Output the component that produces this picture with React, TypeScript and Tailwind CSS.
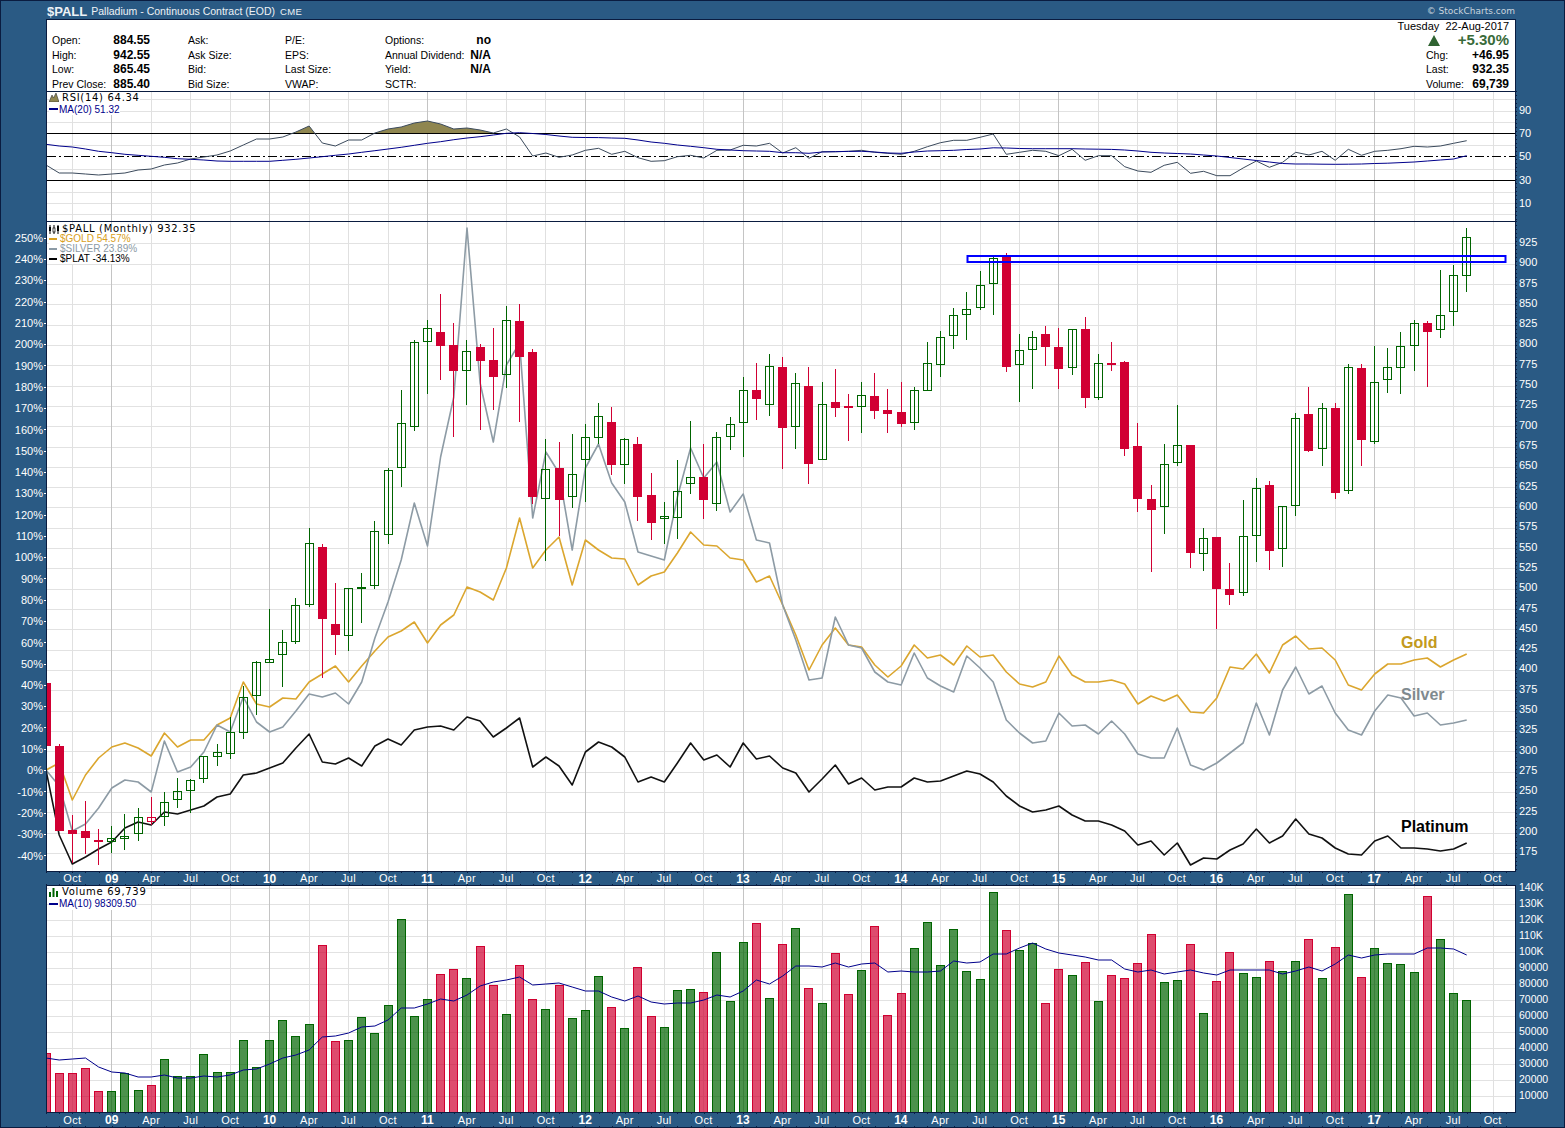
import type { ReactNode } from "react";

// month index 0 = Aug 2008, one candle/bar per month, all y values are px in page space
const stepX = 13.155;
const xAt = (i: number) => 46 + stepX * i;
const pxAt = (i: number) => Math.floor(xAt(i));

type Candle = [number, number, number, number, "g" | "r" | "h"];

// [wick top, wick bottom, body top, body bottom, kind]
const candles: Candle[] = [
  [683, 746, 683, 746, "r"], [744, 831, 746, 831, "r"], [815, 863, 830, 834, "r"], [801, 854, 831, 838, "r"],
  [829, 865, 840, 842, "r"], [826, 853, 838, 842, "g"], [814, 850, 836, 839, "g"], [808, 841, 817, 834, "g"],
  [797, 825, 817, 822, "h"], [792, 826, 802, 817, "g"], [778, 808, 791, 800, "g"], [779, 813, 780, 791, "g"],
  [756, 783, 756, 779, "g"], [744, 766, 752, 757, "g"], [717, 759, 732, 754, "g"], [686, 739, 697, 733, "g"],
  [661, 715, 662, 696, "g"], [609, 663, 659, 663, "g"], [630, 687, 642, 655, "g"], [598, 644, 605, 642, "g"],
  [528, 607, 543, 605, "g"], [544, 678, 547, 619, "r"], [583, 655, 624, 635, "r"], [588, 651, 588, 636, "g"],
  [573, 623, 587, 589, "g"], [521, 589, 531, 586, "g"], [468, 544, 470, 535, "g"], [390, 487, 423, 468, "g"],
  [340, 431, 342, 427, "g"], [320, 394, 328, 342, "g"], [294, 380, 332, 346, "r"], [323, 437, 345, 371, "r"],
  [340, 405, 351, 371, "g"], [344, 430, 347, 361, "r"], [328, 410, 360, 377, "r"], [306, 388, 320, 375, "g"],
  [304, 422, 321, 357, "r"], [349, 504, 352, 497, "r"], [439, 561, 469, 499, "g"], [442, 536, 468, 500, "r"],
  [434, 508, 474, 497, "g"], [424, 502, 437, 460, "g"], [403, 444, 416, 438, "g"], [407, 475, 422, 465, "r"],
  [438, 484, 439, 465, "g"], [437, 521, 444, 497, "r"], [473, 540, 495, 523, "r"], [502, 544, 516, 519, "g"],
  [460, 539, 491, 518, "g"], [421, 494, 477, 484, "g"], [444, 519, 477, 500, "r"], [432, 511, 437, 504, "g"],
  [417, 450, 424, 437, "g"], [377, 457, 390, 423, "g"], [363, 420, 390, 399, "r"], [354, 416, 366, 405, "g"],
  [357, 469, 367, 428, "r"], [373, 449, 383, 427, "g"], [367, 484, 386, 464, "r"], [382, 460, 404, 460, "g"],
  [369, 417, 402, 408, "r"], [394, 441, 406, 408, "r"], [382, 433, 395, 407, "g"], [373, 419, 396, 411, "r"],
  [389, 433, 410, 414, "r"], [382, 427, 412, 424, "r"], [387, 430, 390, 423, "g"], [342, 391, 363, 391, "g"],
  [331, 377, 337, 365, "g"], [308, 349, 315, 336, "g"], [292, 340, 309, 315, "g"], [271, 310, 285, 308, "g"],
  [257, 315, 258, 284, "g"], [253, 372, 256, 367, "r"], [334, 402, 350, 365, "g"], [331, 389, 337, 350, "g"],
  [326, 366, 334, 347, "r"], [328, 389, 347, 369, "r"], [329, 375, 329, 368, "g"], [317, 408, 329, 398, "r"],
  [354, 400, 363, 398, "g"], [342, 371, 363, 365, "r"], [361, 456, 362, 449, "r"], [423, 512, 446, 499, "r"],
  [485, 572, 499, 510, "r"], [444, 534, 464, 507, "g"], [405, 466, 445, 463, "g"], [445, 568, 445, 553, "r"],
  [528, 571, 538, 554, "g"], [537, 629, 537, 589, "r"], [563, 605, 589, 595, "r"], [500, 596, 536, 593, "g"],
  [478, 562, 488, 536, "g"], [481, 570, 485, 551, "r"], [506, 567, 506, 549, "g"], [413, 516, 418, 506, "g"],
  [387, 452, 414, 451, "r"], [403, 466, 408, 449, "g"], [403, 499, 408, 493, "r"], [364, 494, 367, 491, "g"],
  [364, 466, 368, 440, "r"], [346, 444, 382, 442, "g"], [348, 393, 367, 380, "g"], [332, 394, 346, 368, "g"],
  [320, 371, 323, 346, "g"], [321, 387, 323, 332, "r"], [270, 338, 315, 330, "g"], [265, 326, 275, 312, "g"],
  [228, 292, 237, 276, "g"],
];

const gold = [
  770, 763, 800, 775, 758, 747, 743, 748, 756, 733, 747, 740, 740, 725, 718, 682, 704, 707, 698, 699, 682, 674, 666,
  682, 666, 651, 637, 631, 622, 643, 625, 615, 587, 592, 600, 568, 518, 568, 550, 537, 585, 540, 550, 558, 559, 585,
  576, 572, 553, 532, 545, 546, 558, 560, 582, 576, 605, 635, 670, 645, 628, 645, 647, 665, 677, 666, 645, 658, 655,
  665, 646, 657, 655, 672, 684, 687, 682, 656, 675, 682, 682, 680, 684, 704, 696, 701, 695, 712, 713, 698, 667, 669,
  654, 673, 645, 636, 649, 648, 660, 685, 690, 674, 664, 664, 660, 658, 667, 660, 654,
];

const silver = [
  770, 786, 831, 824, 808, 788, 780, 782, 792, 741, 772, 767, 752, 725, 732, 697, 722, 732, 727, 711, 694, 697, 693,
  704, 682, 638, 602, 560, 503, 546, 457, 397, 228, 383, 442, 365, 343, 518, 452, 473, 550, 468, 444, 483, 502, 552,
  556, 560, 497, 448, 478, 462, 512, 494, 540, 543, 605, 640, 680, 678, 617, 645, 648, 672, 682, 685, 653, 678, 686,
  692, 656, 668, 682, 720, 733, 743, 741, 713, 726, 725, 734, 721, 734, 754, 758, 758, 728, 765, 770, 763, 753, 743,
  703, 735, 690, 667, 694, 686, 713, 730, 735, 711, 695, 698, 716, 713, 725, 723, 720,
];

const platinum = [
  770, 835, 864, 857, 849, 842, 828, 822, 825, 812, 814, 810, 806, 797, 794, 775, 773, 768, 763, 748, 734, 762, 764,
  758, 766, 746, 739, 745, 730, 727, 726, 730, 717, 721, 737, 728, 718, 767, 757, 766, 785, 752, 742, 747, 757, 782,
  777, 782, 763, 743, 760, 755, 767, 743, 759, 756, 768, 773, 792, 779, 765, 784, 778, 790, 787, 787, 778, 782, 781,
  776, 771, 774, 782, 796, 806, 812, 810, 806, 815, 821, 821, 825, 831, 845, 841, 855, 843, 865, 858, 859, 850, 844,
  829, 843, 836, 819, 834, 838, 848, 854, 855, 841, 836, 848, 848, 849, 851, 849, 843,
];

const rsi = [
  165, 173, 173, 174, 175, 174, 173, 170, 169, 165, 163, 159, 157, 155, 151, 145, 139, 139, 137, 132, 126, 143, 146,
  140, 140, 133, 129, 127, 123, 121, 124, 129, 128, 130, 133, 129, 137, 156, 153, 157.3, 155, 150.3, 148.3, 154.3,
  151.3, 157.7, 161.3, 160.7, 156.7, 155.3, 158, 150.3, 150, 145.3, 146, 143.3, 153, 147.7, 158.3, 151.7, 151.7, 151.3,
  150.3, 152.3, 153.3, 154.3, 151.3, 146.7, 142.7, 140.3, 140.3, 137.3, 134, 154.3, 152.3, 150.3, 151.3, 155.7, 149.3,
  160.3, 155.7, 155.7, 166.7, 171, 172.3, 165.3, 162.3, 173.3, 171.3, 175.7, 175.7, 168, 161, 167.3, 162.3, 152.3, 155,
  151.3, 160.3, 149.3, 155.3, 151.3, 150.3, 148.7, 146.3, 147, 146, 143.3, 140.7,
];

const rsiMa = [
  144.3, 146, 147, 149, 151.3, 152.7, 154.3, 155.3, 156.3, 157.3, 158.7, 159.3, 160, 161, 161.3, 161.3, 161.3, 161.3,
  160.3, 159.3, 158, 156.7, 155.3, 154, 152.3, 150.7, 149, 147.3, 145.3, 143.3, 141.7, 139.7, 138, 136.7, 135, 133.3,
  132.7, 133.5, 134.5, 136, 137.3, 137.5, 137.6, 138, 138.3, 140, 142, 143.3, 145, 146.3, 147.7, 149.3, 150, 150.7, 151,
  151.3, 152.7, 152.7, 153.3, 152, 151.7, 151.4, 151.3, 152, 153, 153.3, 152, 151, 150.7, 150.3, 149.5, 149, 147.8, 148,
  148.5, 148.7, 148.7, 148.7, 148.7, 149, 149.2, 149.4, 150, 151, 152.3, 153, 153.5, 154, 155, 156, 157.5, 159, 160.5,
  162, 163.5, 164, 164, 164.2, 164.3, 164.2, 164, 163.5, 163.2, 162.6, 162, 161, 160, 159, 155.7,
];

// bar tops, "g"/"r" by index below
const volume: [number, "g" | "r"][] = [
  [1053, "r"], [1073, "r"], [1073, "r"], [1068, "r"], [1091, "r"], [1091, "g"], [1073, "g"], [1090, "g"], [1085, "r"],
  [1059, "g"], [1076, "g"], [1076, "g"], [1054, "g"], [1072, "g"], [1072, "g"], [1040, "g"], [1067, "g"], [1040, "g"],
  [1020, "g"], [1036, "g"], [1024, "g"], [945, "r"], [1041, "r"], [1040, "g"], [1017, "g"], [1033, "g"], [1005, "g"],
  [919, "g"], [1016, "g"], [999, "g"], [974, "r"], [969, "r"], [978, "g"], [946, "r"], [985, "r"], [1014, "g"],
  [965, "r"], [999, "r"], [1009, "g"], [985, "r"], [1018, "g"], [1010, "g"], [976, "g"], [1007, "r"], [1028, "g"],
  [967, "r"], [1016, "r"], [1027, "g"], [990, "g"], [989, "g"], [992, "r"], [952, "g"], [1001, "g"], [942, "g"],
  [923, "r"], [998, "g"], [944, "r"], [928, "g"], [988, "r"], [1003, "g"], [953, "r"], [994, "r"], [970, "g"],
  [926, "r"], [1015, "r"], [993, "r"], [948, "g"], [922, "g"], [965, "g"], [929, "g"], [971, "g"], [979, "g"],
  [892, "g"], [930, "r"], [950, "g"], [943, "g"], [1003, "r"], [969, "r"], [975, "g"], [962, "r"], [1001, "g"],
  [975, "r"], [978, "r"], [963, "r"], [934, "r"], [982, "g"], [980, "g"], [944, "r"], [1013, "g"], [981, "r"],
  [952, "r"], [973, "g"], [977, "g"], [961, "r"], [971, "g"], [961, "g"], [939, "r"], [978, "g"], [947, "r"],
  [894, "g"], [977, "r"], [948, "g"], [963, "g"], [964, "g"], [972, "g"], [896, "r"], [939, "g"], [993, "g"],
  [1000, "g"],
];

const volumeMa = [
  1058, 1060, 1059, 1058, 1067, 1072, 1073, 1077, 1077, 1075, 1078, 1078, 1076, 1077, 1075, 1070, 1069, 1064, 1058,
  1055, 1050, 1037, 1036, 1033, 1027, 1026, 1020, 1008, 1008, 1004, 999, 1001, 995, 986, 982, 980, 977, 985, 984, 983,
  987, 991, 991, 997, 1001, 996, 1002, 1004, 1003, 1003, 1000, 995, 997, 991, 980, 984, 976, 966, 966, 967, 963, 967,
  964, 963, 972, 971, 972, 972, 971, 961, 963, 962, 954, 954, 948, 943, 949, 953, 955, 957, 960, 960, 969, 972, 970,
  974, 972, 970, 973, 975, 970, 970, 970, 970, 974, 971, 967, 971, 964, 955, 958, 955, 954, 954, 954, 948, 948, 949,
  955,
];

const quarterGrid = Array.from({ length: 37 }, (_, n) => 2 + n * 3);
const priceRows = Array.from({ length: 31 }, (_, k) => Math.round(243.3 + 20.32 * k));
const volumeRows = Array.from({ length: 14 }, (_, k) => Math.round(888.3 + 16 * k));
const rsiRows = [99, 111, 122, 145, 169, 192, 203, 214];

const percentLabels = Array.from({ length: 30 }, (_, k) => `${250 - k * 10}%`);
const priceLabels = Array.from({ length: 31 }, (_, k) => String(925 - k * 25));
const volumeLabels = [
  "140K", "130K", "120K", "110K", "100K", "90000", "80000", "70000", "60000", "50000", "40000", "30000", "20000", "10000",
];

const axisLabels = quarterGrid.map((i) => {
  const m = (i - 5 + 120) % 12;
  if (m === 0) return { text: String(9 + (i - 5) / 12).padStart(2, "0"), year: true };
  return { text: m === 3 ? "Apr" : m === 6 ? "Jul" : "Oct", year: false };
});

const points = (ys: number[]) => ys.map((y, i) => `${xAt(i).toFixed(1)},${y}`).join(" ");

function GridLines({ rows, y1, y2 }: { rows: number[]; y1: number; y2: number }) {
  return (
    <g shapeRendering="crispEdges">
      {rows.map((y) => (
        <line key={y} x1={47} x2={1515} y1={y + 0.5} y2={y + 0.5} stroke="#e2e2e2" />
      ))}
      {quarterGrid.map((i) => {
        const x = pxAt(i) + 0.5;
        const isYear = (i - 5) % 12 === 0;
        return <line key={i} x1={x} x2={x} y1={y1} y2={y2} stroke={isYear ? "#c4c4c4" : "#e0e0e0"} />;
      })}
    </g>
  );
}

function CandleMark({ candle, i }: { candle: Candle; i: number }) {
  const [high, low, top, bottom, kind] = candle;
  const x = pxAt(i);
  const color = kind === "g" ? "#006400" : "#d10033";
  return (
    <g shapeRendering="crispEdges">
      <rect x={x} y={high} width={1} height={low - high} fill={color} />
      {kind === "r" ? (
        <rect x={x - 4} y={top} width={9} height={Math.max(bottom - top, 2)} fill={color} />
      ) : (
        <rect x={x - 3.5} y={top + 0.5} width={8} height={Math.max(bottom - top - 1, 1)} fill="none" stroke={color} />
      )}
    </g>
  );
}

function AxisRow({ className }: { className: string }) {
  // month pips along both edges of the strip, starting at the plot's left edge
  return (
    <div
      className={`ml-[45px] w-[1470px] bg-[repeating-linear-gradient(to_right,#0a1c40_0,#0a1c40_1px,transparent_1px,transparent_13.155px)] bg-[length:100%_1px] bg-no-repeat ${className}`}
    >
      <div className="flex h-full items-center bg-[repeating-linear-gradient(to_right,#0a1c40_0,#0a1c40_1px,transparent_1px,transparent_13.155px)] bg-[length:100%_1px] bg-bottom bg-no-repeat pl-[6.6px] text-white">
        {axisLabels.map((l, n) => (
          <span
            key={n}
            className={`w-[39.465px] shrink-0 text-center ${l.year ? "text-[12px] font-bold" : "text-[11px] tracking-[0.3px]"}`}
          >
            {l.text}
          </span>
        ))}
      </div>
    </div>
  );
}

function Panel({ className, children }: { className: string; children: ReactNode }) {
  return <div className={`relative w-[1470px] shrink-0 border-x border-[#0a1c40] bg-white ${className}`}>{children}</div>;
}

function InfoColumn({ rows, className }: { rows: [string, string?][]; className: string }) {
  return (
    <div className={`pt-[13px] ${className}`}>
      {rows.map(([label, value]) => (
        <div key={label} className="flex h-[14.5px] items-center justify-between whitespace-nowrap">
          <span className="mt-[2px] text-[10.5px]">{label}</span>
          {value && <span className="text-[12px] font-bold">{value}</span>}
        </div>
      ))}
    </div>
  );
}

const pipClass =
  "bg-[repeating-linear-gradient(to_bottom,#0a1c40_0,#0a1c40_1px,transparent_1px,transparent_4px)] bg-[length:1px_100%] bg-no-repeat";

const legendMono = "font-['DejaVu_Sans',sans-serif] tracking-[0.7px]";

export default function App() {
  return (
    <div className="h-[1128px] w-[1565px] overflow-hidden border border-[#0a1c40] bg-[#2a5a84] font-['Liberation_Sans',Arial,sans-serif] text-black">
      {/* title bar */}
      <div className="flex h-[18px] items-center pl-[46px] pr-[49px] pt-[4px] text-[#eef2f6]">
        <span className="text-[13px] font-bold">$PALL</span>
        <span className="ml-[4px] text-[10.5px]">Palladium - Continuous Contract (EOD)</span>
        <span className="ml-[5px] text-[9.5px] tracking-[0.4px]">CME</span>
        <span className="ml-auto font-['DejaVu_Sans',sans-serif] text-[9px] text-[#c9d4de]">© StockCharts.com</span>
      </div>

      {/* quote block */}
      <div className="flex h-[72px]">
        <div className="w-[45px] shrink-0" />
        <Panel className="flex border-t pl-[5px]">
          <InfoColumn
            className="w-[98px]"
            rows={[["Open:", "884.55"], ["High:", "942.55"], ["Low:", "865.45"], ["Prev Close:", "885.40"]]}
          />
          <InfoColumn className="ml-[38px] w-[97px]" rows={[["Ask:"], ["Ask Size:"], ["Bid:"], ["Bid Size:"]]} />
          <InfoColumn className="w-[100px]" rows={[["P/E:"], ["EPS:"], ["Last Size:"], ["VWAP:"]]} />
          <InfoColumn
            className="w-[106px]"
            rows={[["Options:", "no"], ["Annual Dividend:", "N/A"], ["Yield:", "N/A"], ["SCTR:"]]}
          />
          <div className="ml-auto mr-[6px] w-[83px]">
            <div className="-ml-[40px] h-[13px] whitespace-nowrap text-right text-[11px] leading-[13px]">
              Tuesday&nbsp; 22-Aug-2017
            </div>
            <div className="flex h-[14.5px] items-center justify-between">
              <span className="ml-[2px] h-0 w-0 border-x-[6px] border-b-[11px] border-x-transparent border-b-[#2f6331]" />
              <span className="text-[15px] font-bold text-[#3a6b3a]">+5.30%</span>
            </div>
            <div className="flex h-[14.5px] items-center justify-between">
              <span className="mt-[2px] text-[10.5px]">Chg:</span>
              <span className="text-[12px] font-bold">+46.95</span>
            </div>
            <div className="flex h-[14.5px] items-center justify-between">
              <span className="mt-[2px] text-[10.5px]">Last:</span>
              <span className="text-[12px] font-bold">932.35</span>
            </div>
            <div className="flex h-[14.5px] items-center justify-between">
              <span className="mt-[2px] text-[10.5px]">Volume:</span>
              <span className="text-[12px] font-bold">69,739</span>
            </div>
          </div>
        </Panel>
      </div>

      {/* RSI */}
      <div className="flex h-[130px]">
        <div className="w-[45px] shrink-0" />
        <Panel className="border-t border-t-[#0a1c40]">
          <svg width={1468} height={129} viewBox="47 92 1468 129" className="block">
            <GridLines rows={rsiRows} y1={92} y2={221} />
            <clipPath id="over70">
              <rect x={47} y={92} width={1468} height={41} />
            </clipPath>
            <polygon
              points={`${points(rsi.slice(0, 35))} ${xAt(34).toFixed(1)},133 47,133`}
              fill="#8f8650"
              clipPath="url(#over70)"
            />
            <g shapeRendering="crispEdges" stroke="#000">
              <line x1={47} x2={1515} y1={133.5} y2={133.5} />
              <line x1={47} x2={1515} y1={156.5} y2={156.5} strokeDasharray="9 3 2 3" />
              <line x1={47} x2={1515} y1={180.5} y2={180.5} />
            </g>
            <polyline points={points(rsi)} fill="none" stroke="#3b4a5c" strokeWidth={1} />
            <polyline points={points(rsiMa)} fill="none" stroke="#00008b" strokeWidth={1} />
          </svg>
          <div className="absolute left-[2px] top-0 text-[10px] leading-[11.5px]">
            <div className={`flex w-fit items-center gap-[3px] bg-white ${legendMono}`}>
              <svg width={10} height={9} viewBox="0 0 10 9">
                <path d="M0 9 L3 2 L4.5 5 L7 0 L10 9 Z" fill="#8f8650" stroke="#333" strokeWidth={0.6} />
              </svg>
              RSI(14) 64.34
            </div>
            <div className="flex w-fit items-center gap-[1px] bg-white text-[#00008b]">
              <span className="h-[2px] w-[9px] bg-[#00008b]" />
              MA(20) 51.32
            </div>
          </div>
        </Panel>
        <div className={`flex-1 pl-[3px] pt-[7.4px] text-[11px] text-white ${pipClass}`}>
          {["90", "70", "50", "30", "10"].map((t) => (
            <div key={t} className="flex h-[23.25px] items-center">
              {t}
            </div>
          ))}
        </div>
      </div>

      {/* price */}
      <div className="flex h-[651px]">
        <div className="w-[45px] shrink-0 pt-[6.5px] text-[11px] text-white">
          {percentLabels.map((t) => (
            <div key={t} className="flex h-[21.31px] items-center justify-end gap-[1px]">
              {t}
              <span className="h-px w-[2px] bg-white" />
            </div>
          ))}
        </div>
        <Panel className="border-y">
          <svg width={1468} height={649} viewBox="47 222 1468 649" className="block">
            <GridLines rows={priceRows} y1={222} y2={871} />
            <polyline points={points(gold)} fill="none" stroke="#dba62e" strokeWidth={1.6} strokeLinejoin="round" />
            <polyline points={points(silver)} fill="none" stroke="#8d9ba5" strokeWidth={1.6} strokeLinejoin="round" />
            <polyline points={points(platinum)} fill="none" stroke="#111" strokeWidth={1.6} strokeLinejoin="round" />
            {candles.map((c, i) => (
              <CandleMark key={i} candle={c} i={i} />
            ))}
            <rect x={967.5} y={256} width={538} height={6} fill="none" stroke="#0000ff" strokeWidth={2} />
          </svg>
          <div className="absolute left-[2px] top-[2px] text-[10px] leading-[10px]">
            <div className={`flex w-fit items-center gap-[3px] bg-white ${legendMono}`}>
              <svg width={10} height={9} viewBox="0 0 10 9">
                <path d="M1 0v9M5 0v9M9 0v9" stroke="#000" strokeWidth={1} />
                <rect x={0} y={2} width={2} height={4} />
                <rect x={4} y={3} width={2} height={4} fill="#fff" stroke="#000" strokeWidth={0.7} />
                <rect x={8} y={1} width={2} height={5} />
              </svg>
              $PALL (Monthly) 932.35
            </div>
            <div className="flex w-fit items-center gap-[3px] bg-white text-[#d9a021]">
              <span className="h-[2px] w-[8px] bg-[#d9a021]" />
              $GOLD 54.57%
            </div>
            <div className="flex w-fit items-center gap-[3px] bg-white text-[#8b9aa5]">
              <span className="h-[2px] w-[8px] bg-[#8b9aa5]" />
              $SILVER 23.89%
            </div>
            <div className="flex w-fit items-center gap-[3px] bg-white">
              <span className="h-[2px] w-[8px] bg-black" />
              $PLAT -34.13%
            </div>
          </div>
          {/* hand annotations on the chart */}
          <span className="absolute left-[1354px] top-[409px] text-[16px] font-bold text-[#c39a1d]">Gold</span>
          <span className="absolute left-[1354px] top-[461px] text-[16px] font-bold text-[#7f8a8f]">Silver</span>
          <span className="absolute left-[1354px] top-[593px] text-[16px] font-bold">Platinum</span>
        </Panel>
        <div className={`flex-1 pl-[3px] pt-[11px] text-[11px] text-white ${pipClass}`}>
          {priceLabels.map((t) => (
            <div key={t} className="flex h-[20.32px] items-center">
              {t}
            </div>
          ))}
        </div>
      </div>

      <AxisRow className="h-[13px]" />

      {/* volume */}
      <div className="flex h-[228px]">
        <div className="w-[45px] shrink-0" />
        <Panel className="border-y">
          <svg width={1468} height={226} viewBox="47 886 1468 226" className="block">
            <GridLines rows={volumeRows} y1={886} y2={1112} />
            <g shapeRendering="crispEdges">
              {volume.map(([top, kind], i) => (
                <rect
                  key={i}
                  x={pxAt(i) - 3.5}
                  y={top + 0.5}
                  width={8}
                  height={1112 - top}
                  fill={kind === "g" ? "#006400" : "#d00030"}
                  fillOpacity={0.7}
                  stroke={kind === "g" ? "#006400" : "#d00030"}
                />
              ))}
            </g>
            <polyline points={points(volumeMa)} fill="none" stroke="#00008b" strokeWidth={1} />
          </svg>
          <div className="absolute left-[2px] top-0 text-[10px] leading-[12px]">
            <div className={`flex w-fit items-center gap-[3px] bg-white ${legendMono}`}>
              <svg width={10} height={9} viewBox="0 0 10 9">
                <path d="M0 9V4h2v5zM3.5 9V0h2v9zM7 9V3h2v6z" fill="#006400" />
              </svg>
              Volume 69,739
            </div>
            <div className="flex w-fit items-center gap-[1px] bg-white text-[#00008b]">
              <span className="h-[2px] w-[9px] bg-[#00008b]" />
              MA(10) 98309.50
            </div>
          </div>
        </Panel>
        <div className="-mt-[5px] flex-1 pl-[3px] text-[10.5px] text-white">
          {volumeLabels.map((t) => (
            <div key={t} className="flex h-[16px] items-center">
              {t}
            </div>
          ))}
        </div>
      </div>

      <AxisRow className="h-[14px]" />
    </div>
  );
}
